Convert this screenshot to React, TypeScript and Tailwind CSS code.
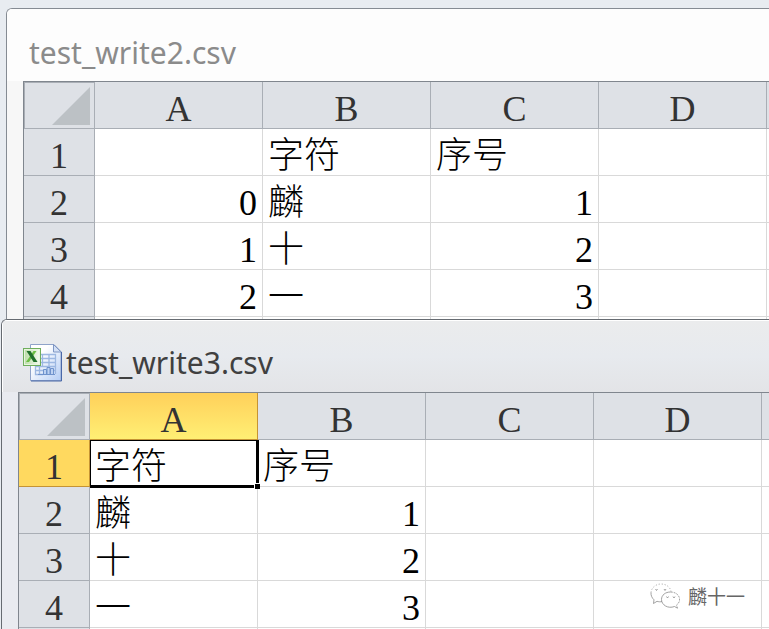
import { useId } from 'react'
import clsx from 'clsx'

type Row = string[]

type SheetProps = {
    title: string
    rows: Row[]
    active?: boolean
}

const COLUMNS = ['A', 'B', 'C', 'D']

const FIRST_ROWS: Row[] = [
    ['', '字符', '序号', ''],
    ['0', '麟', '1', ''],
    ['1', '十', '2', ''],
    ['2', '一', '3', ''],
]

const SECOND_ROWS: Row[] = [
    ['字符', '序号', '', ''],
    ['麟', '1', '', ''],
    ['十', '2', '', ''],
    ['一', '3', '', ''],
]

const isNumber = (value: string) => /^\d+$/.test(value)

function CsvIcon() {
    const id = useId()

    return (
        <svg width="40" height="40" viewBox="0 0 40 40" className="shrink-0" aria-hidden="true">
            <defs>
                <linearGradient id={`${id}page`} x1="0" y1="0" x2="1" y2="1">
                    <stop offset="0.3" stopColor="#ffffff" />
                    <stop offset="1" stopColor="#b4cdf5" />
                </linearGradient>
                <linearGradient id={`${id}badge`} x1="0" y1="0" x2="1" y2="0">
                    <stop offset="0" stopColor="#b9dca4" />
                    <stop offset="1" stopColor="#f6fbf2" />
                </linearGradient>
            </defs>
            <path d="M7.5 1.5H31L38 8.5V37.5H7.5Z" fill={`url(#${id}page)`} stroke="#8fa3c9" />
            <path d="M38.5 9V38H8" fill="none" stroke="#4a68a8" />
            <path d="M30.5 1.5V9H38Z" fill="#d3e0f5" stroke="#7f97c4" />
            <path
                d="M17 11.5H32.5V23.5H12.5V31.5H20M17 15.5H32.5M17 19.5H32.5M12.5 27.5H32.5M19.5 11V23M26 11V23M16.5 24V31M32.5 23V31"
                fill="none"
                stroke="#9db8e2"
                strokeWidth="1.3"
            />
            <path
                d="M20.5 31.5V26.5H23.5V31.5ZM24 31.5V24.5H27V31.5ZM27.5 31.5V25.5H30.5V31.5Z"
                fill="#bdd2f2"
                stroke="#6f93cd"
            />
            <path d="M15 31.5H32" stroke="#6f93cd" />
            <rect x="0.5" y="5.5" width="17" height="17" fill={`url(#${id}badge)`} stroke="#6eae5c" />
            <rect x="1.5" y="6.5" width="15" height="15" fill="none" stroke="#e8f5df" />
            <path d="M13.5 8H10.5L3 19H6Z" fill="#6cbf45" />
            <path d="M3.5 8H7.5L14.5 19H10.5Z" fill="#22702c" />
        </svg>
    )
}

function Sheet({ title, rows, active }: SheetProps) {
    return (
        <section
            aria-label={title}
            className={clsx(
                'relative overflow-hidden rounded-tl-md border-l border-t',
                active ? 'ml-px border-[#666b71] bg-[#e9ebf0]' : 'ml-1.5 border-[#858b93] bg-[#f7f7f7]'
            )}
        >
            <header
                className={clsx(
                    'flex h-[72px] items-center',
                    active
                        ? 'gap-[3px] border-l border-t border-white bg-linear-to-b from-[#ebeced] via-[#e7eaee] to-[#e3e4e7] pl-5 pt-3 text-[#404040]'
                        : 'bg-[#fdfdfd] pl-[22px] pt-4 text-[#8b8b8b]'
                )}
            >
                {active && <CsvIcon />}
                <h2 className="font-['Noto_Sans',sans-serif] text-[30px] leading-10">{title}</h2>
            </header>

            <div className="ml-4 border-l border-t border-[#80868e]">
                <table className="w-full table-fixed border-separate border-spacing-0 bg-white font-['Liberation_Serif','Noto_Sans_CJK_SC',serif] text-[36px] leading-9">
                    <colgroup>
                        <col className="w-[71px]" />
                        {COLUMNS.map(column => (
                            <col key={column} className="w-[168px]" />
                        ))}
                        <col />
                    </colgroup>
                    <thead>
                        <tr className="h-[47px] bg-[#dee1e6] text-[#333333]">
                            <td className="border border-[#a9aeb5] p-0">
                                <svg width="38" height="38" viewBox="0 0 38 38" className="ml-auto mr-1" aria-hidden="true">
                                    <path d="M38 0V38H0Z" fill="#bcc1c5" />
                                </svg>
                            </td>
                            {COLUMNS.map((column, i) => (
                                <th
                                    key={column}
                                    scope="col"
                                    className={clsx(
                                        'border-b border-r p-0 pt-2 font-normal',
                                        active && i === 0
                                            ? 'border-[#c59334] bg-linear-to-b from-[#ffd05a] to-[#ffef74]'
                                            : 'border-[#a9aeb5]'
                                    )}
                                >
                                    {column}
                                </th>
                            ))}
                            <td className="border-b border-[#a9aeb5] p-0" />
                        </tr>
                    </thead>
                    <tbody>
                        {rows.map((row, r) => (
                            <tr key={r} className="h-[47px]">
                                <th
                                    scope="row"
                                    className={clsx(
                                        'border-b border-r p-0 pt-2 font-normal text-[#333333]',
                                        active && r === 0 ? 'border-[#c59334] bg-[#ffd95f]' : 'border-[#a9aeb5] bg-[#dee1e6]'
                                    )}
                                >
                                    {r + 1}
                                </th>
                                {row.map((value, c) => (
                                    <td
                                        key={c}
                                        className={clsx(
                                            'relative border-b border-r border-[#d9d9d9] px-[5px] pb-0 pt-2 text-black',
                                            isNumber(value) ? 'text-right' : 'font-light'
                                        )}
                                    >
                                        {value}
                                        {active && r === 0 && c === 0 && (
                                            <>
                                                <span className="absolute -bottom-0.5 -right-0.5 left-0 top-0 z-10 border-b-[3px] border-l border-r-[3px] border-t border-black" />
                                                <span className="absolute -bottom-[3px] -right-[3px] z-20 size-1.5 border-l border-t border-white bg-black" />
                                            </>
                                        )}
                                    </td>
                                ))}
                                <td className="border-b border-[#d9d9d9] p-0" />
                            </tr>
                        ))}
                        {/* top edge of the next row */}
                        <tr className="h-0.5" aria-hidden="true">
                            <td className="border-r border-[#a9aeb5] bg-[#dee1e6] p-0" />
                            {COLUMNS.map(column => (
                                <td key={column} className="border-r border-[#d9d9d9] p-0" />
                            ))}
                            <td className="p-0" />
                        </tr>
                    </tbody>
                </table>
            </div>
        </section>
    )
}

function Watermark() {
    return (
        <div className="absolute bottom-5 right-6 flex items-center gap-2">
            <svg width="30" height="26" viewBox="0 0 30 26" fill="none" stroke="#8a8a8a" strokeWidth="0.8" aria-hidden="true">
                <path d="M12 18.5C10.5 19 8.5 18.8 7 18.3L3.5 20.5L4 16.8C2 15 0.8 12.500 1 9.500" />
                <path d="M1 9.500C1.500 4.500 6 1 11 1C16.500 1 20.500 4.500 21 8.500" strokeDasharray="1 2" />
                <path d="M27.5 25.2L24.5 23.5C18 26 11.500 22 11.500 16.500C11.500 12 15.500 9 20.500 9" />
                <path d="M20.500 9C29.500 9 32.500 18 26.500 22L27.500 25.200" strokeDasharray="2 1" />
                <path d="M5.500 6L6.500 7.500L7.500 6M14 6L15 7.500L16 6M16.500 13.500L17.500 15L18.500 13.500M23 13.500L24 15L25 13.500" />
            </svg>
            <span className="font-['Noto_Sans_CJK_SC',sans-serif] text-[19px] leading-6 text-[#666666]">麟十一</span>
        </div>
    )
}

export default function App() {
    return (
        <main className="relative h-screen overflow-hidden bg-[#e8ecf1] pt-2">
            <Sheet title="test_write2.csv" rows={FIRST_ROWS} />
            <Sheet title="test_write3.csv" rows={SECOND_ROWS} active />
            <Watermark />
        </main>
    )
}
